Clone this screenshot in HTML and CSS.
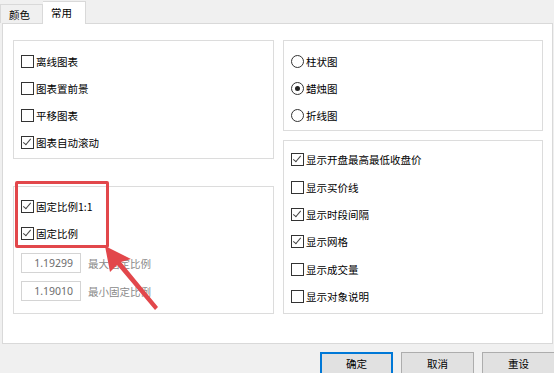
FILE: index.html
```html
<!DOCTYPE html>
<html lang="zh-CN">
<head>
    <meta charset="UTF-8">
    <title>图表属性</title>
    <link rel="stylesheet" href="styles.css">
</head>
<body>
    <div class="tabs">
        <div class="tab">颜色</div>
        <div class="tab active">常用</div>
    </div>

    <div class="page">
        <div class="col">
            <div class="group g-left1">
                <div class="row"><span class="cb"></span>离线图表</div>
                <div class="row"><span class="cb"></span>图表置前景</div>
                <div class="row"><span class="cb"></span>平移图表</div>
                <div class="row"><span class="cb on"></span>图表自动滚动</div>
            </div>
            <div class="group g-left2">
                <div class="row"><span class="cb on"></span>固定比例1:1</div>
                <div class="row"><span class="cb on"></span>固定比例</div>
                <div class="field"><span class="num">1.19299</span><span class="lbl">最大固定比例</span></div>
                <div class="field"><span class="num">1.19010</span><span class="lbl">最小固定比例</span></div>
            </div>
        </div>
        <div class="col">
            <div class="group g-right1">
                <div class="row"><span class="rb"></span>柱状图</div>
                <div class="row"><span class="rb on"></span>蜡烛图</div>
                <div class="row"><span class="rb"></span>折线图</div>
            </div>
            <div class="group g-right2">
                <div class="row"><span class="cb on"></span>显示开盘最高最低收盘价</div>
                <div class="row"><span class="cb"></span>显示买价线</div>
                <div class="row"><span class="cb on"></span>显示时段间隔</div>
                <div class="row"><span class="cb on"></span>显示网格</div>
                <div class="row"><span class="cb"></span>显示成交量</div>
                <div class="row"><span class="cb"></span>显示对象说明</div>
            </div>
        </div>
    </div>

    <div class="buttons">
        <button class="default">确定</button>
        <button>取消</button>
        <button>重设</button>
    </div>

    <!-- 标注 -->
    <div class="mark"></div>
    <svg class="arrow" width="554" height="373" viewBox="0 0 554 373">
        <polygon points="105,246 131,259 121,262 158,307 155,310 117,265 110,272" fill="#e2474b"/>
    </svg>
</body>
</html>
```

FILE: styles.css
```css
body {
    margin: 0;
    width: 554px;
    height: 373px;
    background: #f0f0f0;
    font-family: 'Noto Sans CJK SC', 'Noto Sans', sans-serif;
    font-size: 10.5px;
    color: #000;
    overflow: hidden;
    position: relative;
}

.tabs {
    display: flex;
    align-items: flex-end;
    height: 23px;
    padding-left: 0;
}

.tab {
    width: 43px;
    height: 19px;
    line-height: 19px;
    box-sizing: border-box;
    padding-left: 8px;
    border: 1px solid #d9d9d9;
    border-bottom: none;
    background: #f0f0f0;
}

.tab.active {
    height: 23px;
    line-height: 21px;
    background: #fff;
    border-left: none;
    padding-left: 8px;
    position: relative;
    top: 1px;
}

.page {
    margin: 0 1px 0 2px;
    height: 321px;
    box-sizing: border-box;
    background: #fff;
    border: 1px solid #d9d9d9;
    padding: 16px 0 0 10px;
    display: flex;
    gap: 9px;
}

.col {
    width: 261px;
    display: flex;
    flex-direction: column;
}

.col + .col {
    width: 260px;
    gap: 9px;
}

.g-left1 {
    height: 119px;
    padding-top: 7px;
    margin-bottom: 27px;
}

.g-left2 {
    height: 128px;
    padding-top: 6px;
}

.g-right1 {
    height: 91px;
    padding-top: 7px;
}

.g-right2 {
    height: 174px;
    padding-top: 5px;
}

.group {
    box-sizing: border-box;
    border: 1px solid #dcdcdc;
    padding-left: 7px;
}

.row {
    height: 27px;
    display: flex;
    align-items: center;
    gap: 2px;
}

.g-right2 .row {
    height: 27.4px;
}

.cb {
    width: 11px;
    height: 11px;
    border: 1px solid #333;
    background: #fff;
    position: relative;
}

.cb.on::after {
    content: "";
    position: absolute;
    left: 3px;
    top: 0px;
    width: 3px;
    height: 7px;
    border: solid #444;
    border-width: 0 1px 1px 0;
    transform: rotate(40deg);
}

.rb {
    width: 11px;
    height: 11px;
    border: 1px solid #333;
    border-radius: 50%;
    background: #fff;
    position: relative;
}

.rb.on::after {
    content: "";
    position: absolute;
    left: 3px;
    top: 3px;
    width: 5px;
    height: 5px;
    border-radius: 50%;
    background: #222;
}

.field {
    display: flex;
    align-items: center;
    height: 20px;
    margin-top: 6px;
}

.field + .field {
    margin-top: 8px;
}

.num {
    width: 60px;
    height: 20px;
    box-sizing: border-box;
    border: 1px solid #d4d4d4;
    text-align: right;
    padding-right: 7px;
    line-height: 18px;
    color: #6d6d6d;
    font-family: 'Noto Sans', sans-serif;
    font-size: 10.5px;
}

.lbl {
    margin-left: 7px;
    color: #8a8a8a;
}

.buttons {
    display: flex;
    justify-content: flex-end;
    gap: 8px;
    padding-top: 8px;
    margin-right: -1px;
}

button {
    width: 73px;
    height: 23px;
    border: 1px solid #adadad;
    background: #e1e1e1;
    font-family: 'Noto Sans CJK SC', sans-serif;
    font-size: 10.5px;
    color: #000;
    padding: 0;
}

button.default {
    border: 2px solid #0078d7;
}

.mark {
    position: absolute;
    left: 15px;
    top: 181px;
    width: 88px;
    height: 61px;
    border: 3px solid #e2474b;
    border-radius: 2px;
}

.arrow {
    position: absolute;
    left: 0;
    top: 0;
}
```
